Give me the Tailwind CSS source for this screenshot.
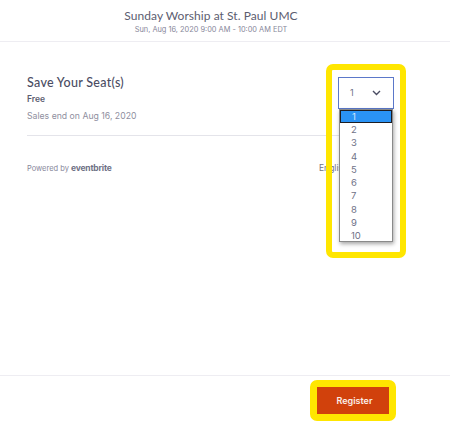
<!DOCTYPE html>
<html lang="en">
<head>
    <meta charset="UTF-8">
    <title>Sunday Worship at St. Paul UMC</title>
    <script src="https://cdn.jsdelivr.net/npm/@tailwindcss/browser@4"></script>
</head>
<body class="bg-white overflow-hidden font-['Inter',sans-serif] text-[#4b4d63]">
    <div class="relative flex flex-col w-[450px] h-[425px]">

        <!-- Event header -->
        <div class="h-[42px] shrink-0 border-b border-[#eeedf2] flex flex-col items-center pt-[8px] pr-[28px]">
            <h1 class="font-['Lato',sans-serif] text-[12px] leading-[16px] tracking-[0.05px] text-[#5c5d70]">Sunday Worship at St. Paul UMC</h1>
            <p class="mt-[1px] text-[7.4px] leading-[10px] text-[#87879a]">Sun, Aug 16, 2020 9:00 AM - 10:00 AM EDT</p>
        </div>

        <!-- Ticket row -->
        <div class="flex-1 px-[27px]">
            <div class="h-[94px] border-b border-[#e4e4ea] pt-[33px] w-[366px]">
                <h2 class="font-['Lato',sans-serif] text-[12.5px] leading-[16px] font-medium tracking-[0.28px] text-[#4b4d63]">Save Your Seat(s)</h2>
                <p class="mt-[2px] text-[8.5px] leading-[12px] font-semibold text-[#5c5d70]">Free</p>
                <p class="mt-[5px] text-[8.7px] leading-[12px] text-[#8f8fa0]">Sales end on Aug 16, 2020</p>
            </div>
            <div class="flex justify-between items-center w-[366px] mt-[25px] h-[14px] text-[7.5px] text-[#87879a]">
                <p>Powered by <span class="text-[8.5px] font-bold tracking-[-0.2px] text-[#6f7287]">eventbrite</span></p>
                <span class="text-[8.5px] text-[#6f7287] mr-[45px]">English</span>
            </div>
        </div>

        <!-- Checkout footer -->
        <div class="h-[50px] shrink-0 border-t border-[#eeedf2] flex justify-end pt-[11px] pr-[61px]">
            <button class="w-[72px] h-[27px] pl-[3px] bg-[#d1410c] text-[#fbeee8] text-[9px] font-semibold">Register</button>
        </div>

        <!-- Quantity select with its open list -->
        <div class="absolute left-[338px] top-[77px] w-[56px] h-[32px] bg-white border border-[#5b78c9] flex items-center justify-between pl-[11px] pr-[12px] text-[9px] text-[#6f7287]">
            <span>1</span>
            <svg width="9" height="6" viewBox="0 0 9 6" fill="none" stroke="#4b4d63" stroke-width="1.4"><path d="M1 1l3.5 3.5L8 1"/></svg>
        </div>
        <ul class="absolute left-[339px] top-[109px] w-[54px] h-[133px] bg-white border border-[#8a8a8a] shadow-[1px_2px_4px_rgba(0,0,0,0.35)] text-[9.5px] leading-[13.3px] text-[#6f7287]">
            <li class="h-[13px] pl-[11px] bg-[#2a93f5] text-[#d6e9fb] border border-[#1d1d22] leading-[11px]">1</li>
            <li class="pl-[11px]">2</li>
            <li class="pl-[11px]">3</li>
            <li class="pl-[11px]">4</li>
            <li class="pl-[11px]">5</li>
            <li class="pl-[11px]">6</li>
            <li class="pl-[11px]">7</li>
            <li class="pl-[11px]">8</li>
            <li class="pl-[11px]">9</li>
            <li class="pl-[11px]">10</li>
        </ul>

        <!-- Yellow annotation boxes -->
        <div class="absolute left-[326px] top-[64px] w-[80px] h-[194px] border-[6px] border-[#ffe600] rounded-[7px]"></div>
        <div class="absolute left-[310px] top-[380px] w-[86px] h-[41px] border-[7px] border-[#ffe600] rounded-[7px]"></div>
    </div>
</body>
</html>
